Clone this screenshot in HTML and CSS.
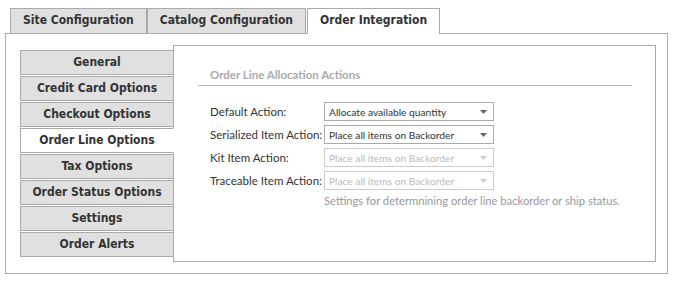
FILE: index.html
```html
<!DOCTYPE html>
<html lang="en">
<head>
<meta charset="UTF-8" />
<title>Order Integration</title>
<link rel="stylesheet" href="styles.css">
</head>
<body>
  <div class="tabs">
    <a href="#" class="tab">Site Configuration</a>
    <a href="#" class="tab">Catalog Configuration</a>
    <a href="#" class="tab active">Order Integration</a>
  </div>

  <div class="frame">
    <nav class="sidenav">
      <a href="#" class="navBtn">General</a>
      <a href="#" class="navBtn">Credit Card Options</a>
      <a href="#" class="navBtn">Checkout Options</a>
      <a href="#" class="navBtn active">Order Line Options</a>
      <a href="#" class="navBtn">Tax Options</a>
      <a href="#" class="navBtn">Order Status Options</a>
      <a href="#" class="navBtn">Settings</a>
      <a href="#" class="navBtn">Order Alerts</a>
    </nav>

    <section class="panel">
      <h3 class="panelTitle">Order Line Allocation Actions</h3>

      <div class="row">
        <label>Default Action:</label>
        <div class="select">
          <span>Allocate available quantity</span>
          <svg class="arrow" width="7" height="4" viewBox="0 0 7 4"><path d="M0 0h7L3.5 4z" /></svg>
        </div>
      </div>
      <div class="row">
        <label>Serialized Item Action:</label>
        <div class="select">
          <span>Place all items on Backorder</span>
          <svg class="arrow" width="7" height="4" viewBox="0 0 7 4"><path d="M0 0h7L3.5 4z" /></svg>
        </div>
      </div>
      <div class="row">
        <label>Kit Item Action:</label>
        <div class="select disabled">
          <span>Place all items on Backorder</span>
          <svg class="arrow" width="7" height="4" viewBox="0 0 7 4"><path d="M0 0h7L3.5 4z" /></svg>
        </div>
      </div>
      <div class="row">
        <label>Traceable Item Action:</label>
        <div class="select disabled">
          <span>Place all items on Backorder</span>
          <svg class="arrow" width="7" height="4" viewBox="0 0 7 4"><path d="M0 0h7L3.5 4z" /></svg>
        </div>
      </div>
      <p class="hint">Settings for determnining order line backorder or ship status.</p>
    </section>
  </div>
</body>
</html>
```

FILE: styles.css
```css
body {
  margin: 0;
  background: white;
  color: #333;
  font-family: Lato, 'Liberation Sans', sans-serif;
  font-size: 11.5px;
}
.tabs {
  display: flex;
  padding: 8px 0 0 10px;
}
.tab {
  display: block;
  height: 24px;
  line-height: 23px;
  padding: 0 12px;
  background: #e0e0e0;
  border: 1px solid #aaa;
  border-bottom: none;
  color: #333;
  text-decoration: none;
  font-family: 'DejaVu Sans Condensed', 'Liberation Sans', sans-serif;
  font-weight: bold;
  font-size: 12px;
}
.tab.active {
  background: white;
  position: relative;
  height: 25px;
  margin-bottom: -1px;
  margin-left: 1px;
}
.frame {
  box-sizing: border-box;
  width: 663px;
  height: 241px;
  margin-left: 5px;
  border: 1px solid #aaa;
  padding: 11px 11px 11px 14px;
  display: flex;
  align-items: flex-start;
}
.sidenav {
  width: 154px;
  margin-top: 5px;
  display: flex;
  flex-direction: column;
  gap: 1px;
  flex-shrink: 0;
}
.navBtn {
  box-sizing: border-box;
  height: 25px;
  line-height: 23px;
  text-align: center;
  background: #e0e0e0;
  border: 1px solid #aaa;
  color: #333;
  text-decoration: none;
  font-family: 'DejaVu Sans Condensed', 'Liberation Sans', sans-serif;
  font-weight: bold;
  font-size: 12px;
}
.navBtn.active {
  background: white;
  border-right-color: white;
  position: relative;
  z-index: 1;
}
.panel {
  box-sizing: border-box;
  flex: 1;
  height: 217px;
  margin-left: -1px;
  border: 1px solid #aaa;
  padding: 21px 23px 0 24px;
}
.panelTitle {
  margin: 0 0 16px;
  padding: 0 0 2px 12px;
  line-height: 16px;
  font-size: 11.5px;
  font-weight: bold;
  color: #aaa;
  border-bottom: 1px solid #bbb;
}
.row {
  display: flex;
  align-items: center;
  padding-left: 12px;
  margin-bottom: 4px;
}
.row label {
  width: 114px;
  flex-shrink: 0;
  white-space: nowrap;
}
.select {
  box-sizing: border-box;
  width: 170px;
  height: 19px;
  border: 1px solid #aaa;
  display: flex;
  align-items: center;
  justify-content: space-between;
  padding: 0 6px 0 4px;
  font-size: 10.2px;
}
.arrow {
  fill: #666;
}
.select.disabled {
  border-color: #ccc;
  color: #bbb;
}
.select.disabled .arrow {
  fill: #ccc;
}
.hint {
  margin: 0;
  padding-left: 126px;
  line-height: 14px;
  font-size: 11.2px;
  color: #999;
  white-space: nowrap;
}
```
